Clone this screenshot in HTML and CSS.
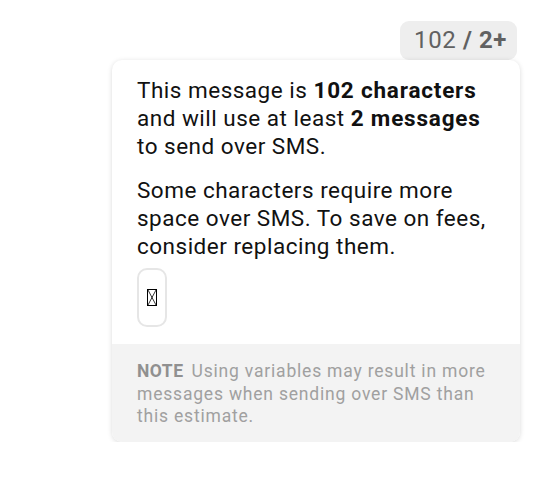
FILE: index.html
```html
<!DOCTYPE html>
<html>
<head>
<meta charset="utf-8">
<link rel="stylesheet" href="styles.css">
</head>
<body>
<div class="wrap">
  <div class="counter"><span class="count">102</span><span class="sep"> / 2+</span></div>
  <div class="card">
    <div class="body">
      <p class="para">This message is <b>102 characters</b> and will use at least <b>2 messages</b> to send over SMS.</p>
      <p class="para">Some characters require more space over SMS. To save on fees, consider replacing them.</p>
      <div class="chars">
        <span class="char"><svg width="10" height="17" viewBox="0 0 10 17"><rect x="0.5" y="0.5" width="9" height="16" fill="none" stroke="#000" stroke-width="1"/><path d="M1 1 L9 16 M9 1 L1 16" stroke="#000" stroke-width="0.8"/></svg></span>
      </div>
    </div>
    <div class="note"><b class="tag">NOTE</b><span>Using variables may result in more messages when sending over SMS than this estimate.</span></div>
  </div>
</div>
</body>
</html>
```
FILE: styles.css
```css
html, body { margin: 0; padding: 0; background: #fff; }
body { font-family: Roboto, "Noto Sans", sans-serif; }
.wrap {
  display: flex;
  flex-direction: column;
  align-items: flex-end;
  padding: 21px 20px 0 0;
}
.counter {
  background: #eeeeee;
  border-radius: 9px;
  padding: 4px 10px 5px 14px;
  font-size: 24px;
  line-height: 30px;
  letter-spacing: 0.6px;
  color: #616161;
  margin-right: 3px;
}
.counter .sep { font-weight: 700; }
.card {
  width: 408px;
  background: #fff;
  border-radius: 10px;
  box-shadow: 0 1px 5px rgba(0,0,0,0.15);
  overflow: hidden;
}
.body {
  display: flex;
  flex-direction: column;
  align-items: flex-start;
  padding: 16px 25px 17px 25px;
}
.para {
  margin: 0;
  font-size: 22.5px;
  line-height: 28px;
  letter-spacing: 0.5px;
  color: #111;
}
.para + .para { margin-top: 16px; }
.para b { font-weight: 700; letter-spacing: 0.8px; }
.chars { display: flex; margin-top: 8px; }
.char {
  display: flex;
  align-items: center;
  justify-content: center;
  width: 26px;
  height: 55px;
  border: 2px solid #e6e6e6;
  border-radius: 10px;
}
.note {
  background: #f3f3f3;
  padding: 16px 25px 14px 25px;
  font-size: 17.5px;
  line-height: 22.5px;
  letter-spacing: 0.8px;
  color: #a0a0a0;
}
.note .tag { color: #909090; font-weight: 700; letter-spacing: 0.5px; margin-right: 8px; }
```
